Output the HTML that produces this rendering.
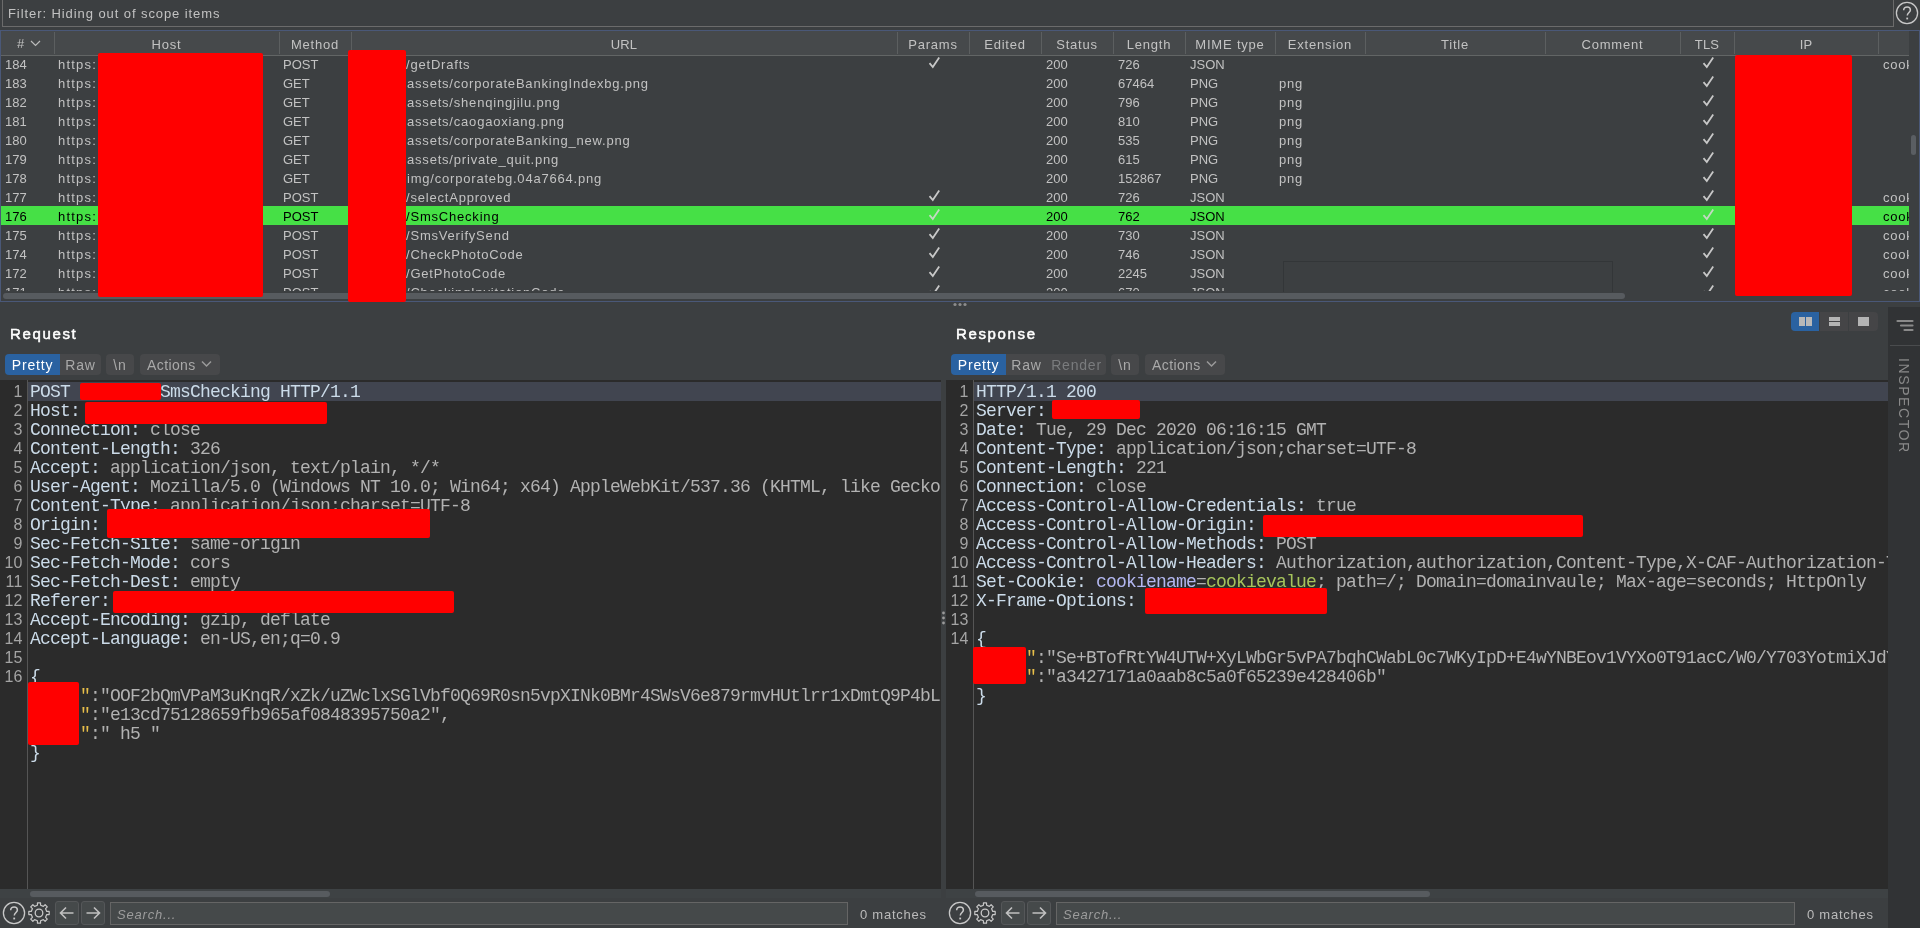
<!DOCTYPE html><html><head><meta charset="utf-8"><style>
*{margin:0;padding:0;box-sizing:border-box}
html,body{width:1920px;height:928px;overflow:hidden;background:#3c3f41;font-family:"Liberation Sans",sans-serif;font-size:13px;color:#c2c2c2;letter-spacing:0.8px;-webkit-font-smoothing:antialiased}
.a{position:absolute}
.red{position:absolute;background:#ff0000;border-radius:2px}
.t{position:absolute;white-space:nowrap}
.th{position:absolute;white-space:nowrap;top:0;line-height:27px;text-align:center}
.sep{position:absolute;width:1px;background:#5c5f60}
.row{position:absolute;left:0;width:1908px;height:19px;white-space:nowrap}
.row span{position:absolute;top:1px;line-height:19px}
.sel{background:#46e046;color:#000}
.u{letter-spacing:0}
.title{position:absolute;font-weight:normal;font-size:15px;color:#ffffff;letter-spacing:1.65px;-webkit-text-stroke:0.5px #ffffff}
.tb{position:absolute;height:21px;line-height:23px;background:#47484a;color:#a9a9a9;font-size:14px;text-align:center}
.tb.on{background:#2a62a1;color:#ffffff}
.ed{position:absolute;top:380px;height:509px;background:#2b2b2b;overflow:hidden}
.gut{position:absolute;left:27px;top:0;width:1px;height:509px;background:#555555}
.ln{position:absolute;left:0;width:22.6px;text-align:right;font-family:"Liberation Sans",sans-serif;font-size:16px;letter-spacing:0.2px;color:#a4a4a4;line-height:19px;white-space:pre}
.cur{position:absolute;left:28px;top:2px;height:19px;background:#414550}
.code{position:absolute;font-family:"Liberation Mono",monospace;font-size:18px;letter-spacing:-0.8016px;line-height:19px;white-space:pre;color:#b2b2b2}
.k{color:#cbdbe9}
.q{color:#e8bf4a}
.cn{color:#b3b7f0}
.cv{color:#a6c45c}
.search{position:absolute;height:23px;background:#45494a;border:1px solid #656565;font-style:italic;color:#9c9c9c;font-size:13px;line-height:23px;padding-left:6px;letter-spacing:0.8px}
.matches{position:absolute;line-height:24px;color:#bbbbbb;font-size:13px;letter-spacing:0.75px}
.btn{position:absolute;border:1px solid #555759;background:#45494a;border-radius:3px}
</style></head><body><div id="root" style="position:absolute;left:0;top:0;width:1920px;height:928px;overflow:hidden;will-change:transform">
<div class="a" style="left:2px;top:-2px;width:1892px;height:29px;border:1px solid #6b6b6b"></div>
<div class="t" style="left:8px;top:6px;line-height:16px;letter-spacing:0.92px">Filter: Hiding out of scope items</div>
<svg class="a" style="left:1895px;top:1px" width="24" height="24" viewBox="0 0 24 24"><circle cx="12" cy="12" r="10.6" fill="none" stroke="#c8c8c8" stroke-width="1.3"/><path d="M8.7 9.3c0-2.1 1.4-3.4 3.4-3.4s3.3 1.3 3.3 3.1c0 2.3-3.1 2.7-3.1 5.6" fill="none" stroke="#c8c8c8" stroke-width="1.5"/><rect x="11.3" y="16.6" width="1.8" height="1.8" fill="#c8c8c8"/></svg>
<div class="a" style="left:0;top:30px;width:1920px;height:272px;border:1px solid #4a5878"></div>
<div class="a" style="left:1px;top:31px;width:1908px;height:24px;background:#46494b"></div>
<div class="a" style="left:1px;top:55px;width:1908px;height:1px;background:#626565"></div>
<div class="sep" style="left:54px;top:32px;height:22px"></div>
<div class="sep" style="left:279px;top:32px;height:22px"></div>
<div class="sep" style="left:351px;top:32px;height:22px"></div>
<div class="sep" style="left:897px;top:32px;height:22px"></div>
<div class="sep" style="left:969px;top:32px;height:22px"></div>
<div class="sep" style="left:1041px;top:32px;height:22px"></div>
<div class="sep" style="left:1113px;top:32px;height:22px"></div>
<div class="sep" style="left:1185px;top:32px;height:22px"></div>
<div class="sep" style="left:1275px;top:32px;height:22px"></div>
<div class="sep" style="left:1365px;top:32px;height:22px"></div>
<div class="sep" style="left:1545px;top:32px;height:22px"></div>
<div class="sep" style="left:1680px;top:32px;height:22px"></div>
<div class="sep" style="left:1734px;top:32px;height:22px"></div>
<div class="sep" style="left:1878px;top:32px;height:22px"></div>
<div class="t" style="left:17px;top:36px;line-height:16px">#</div>
<svg class="a" style="left:30px;top:40px" width="11" height="7" viewBox="0 0 11 7"><path d="M1 1l4.5 4.5L10 1" fill="none" stroke="#bbbbbb" stroke-width="1.2"/></svg>
<div class="th" style="left:54px;width:225px;top:31px;height:24px">Host</div>
<div class="th" style="left:279px;width:72px;top:31px;height:24px">Method</div>
<div class="th" style="left:351px;width:546px;top:31px;height:24px;letter-spacing:0.2px">URL</div>
<div class="th" style="left:897px;width:72px;top:31px;height:24px">Params</div>
<div class="th" style="left:969px;width:72px;top:31px;height:24px">Edited</div>
<div class="th" style="left:1041px;width:72px;top:31px;height:24px">Status</div>
<div class="th" style="left:1113px;width:72px;top:31px;height:24px">Length</div>
<div class="th" style="left:1185px;width:90px;top:31px;height:24px">MIME type</div>
<div class="th" style="left:1275px;width:90px;top:31px;height:24px">Extension</div>
<div class="th" style="left:1365px;width:180px;top:31px;height:24px">Title</div>
<div class="th" style="left:1545px;width:135px;top:31px;height:24px">Comment</div>
<div class="th" style="left:1680px;width:54px;top:31px;height:24px;letter-spacing:0.2px">TLS</div>
<div class="th" style="left:1734px;width:144px;top:31px;height:24px;letter-spacing:0.2px">IP</div>
<div class="a" style="left:1px;top:56px;width:1908px;height:235px;overflow:hidden">
<div class="row" style="top:-2px">
<span class="u" style="left:4px">184</span>
<span style="left:57px;letter-spacing:1.2px">https:</span>
<span class="u" style="left:282px">POST</span>
<span style="left:405px">/getDrafts</span>
<svg class="a" style="left:927px;top:2px" width="13" height="13" viewBox="0 0 13 13"><path d="M1.5 7.2L4.8 11L11.2 1.5" fill="none" stroke="#c8c8c8" stroke-width="1.8" stroke-linejoin="miter"/></svg>
<span class="u" style="left:1045px">200</span>
<span class="u" style="left:1117px">726</span>
<span class="u" style="left:1189px">JSON</span>
<svg class="a" style="left:1701px;top:2px" width="13" height="13" viewBox="0 0 13 13"><path d="M1.5 7.2L4.8 11L11.2 1.5" fill="none" stroke="#c8c8c8" stroke-width="1.8" stroke-linejoin="miter"/></svg>
<span style="left:1882px">cookie</span>
</div>
<div class="row" style="top:17px">
<span class="u" style="left:4px">183</span>
<span style="left:57px;letter-spacing:1.2px">https:</span>
<span class="u" style="left:282px">GET</span>
<span style="left:406px">assets/corporateBankingIndexbg.png</span>
<span class="u" style="left:1045px">200</span>
<span class="u" style="left:1117px">67464</span>
<span class="u" style="left:1189px">PNG</span>
<span style="left:1278px">png</span>
<svg class="a" style="left:1701px;top:2px" width="13" height="13" viewBox="0 0 13 13"><path d="M1.5 7.2L4.8 11L11.2 1.5" fill="none" stroke="#c8c8c8" stroke-width="1.8" stroke-linejoin="miter"/></svg>
</div>
<div class="row" style="top:36px">
<span class="u" style="left:4px">182</span>
<span style="left:57px;letter-spacing:1.2px">https:</span>
<span class="u" style="left:282px">GET</span>
<span style="left:406px">assets/shenqingjilu.png</span>
<span class="u" style="left:1045px">200</span>
<span class="u" style="left:1117px">796</span>
<span class="u" style="left:1189px">PNG</span>
<span style="left:1278px">png</span>
<svg class="a" style="left:1701px;top:2px" width="13" height="13" viewBox="0 0 13 13"><path d="M1.5 7.2L4.8 11L11.2 1.5" fill="none" stroke="#c8c8c8" stroke-width="1.8" stroke-linejoin="miter"/></svg>
</div>
<div class="row" style="top:55px">
<span class="u" style="left:4px">181</span>
<span style="left:57px;letter-spacing:1.2px">https:</span>
<span class="u" style="left:282px">GET</span>
<span style="left:406px">assets/caogaoxiang.png</span>
<span class="u" style="left:1045px">200</span>
<span class="u" style="left:1117px">810</span>
<span class="u" style="left:1189px">PNG</span>
<span style="left:1278px">png</span>
<svg class="a" style="left:1701px;top:2px" width="13" height="13" viewBox="0 0 13 13"><path d="M1.5 7.2L4.8 11L11.2 1.5" fill="none" stroke="#c8c8c8" stroke-width="1.8" stroke-linejoin="miter"/></svg>
</div>
<div class="row" style="top:74px">
<span class="u" style="left:4px">180</span>
<span style="left:57px;letter-spacing:1.2px">https:</span>
<span class="u" style="left:282px">GET</span>
<span style="left:406px">assets/corporateBanking_new.png</span>
<span class="u" style="left:1045px">200</span>
<span class="u" style="left:1117px">535</span>
<span class="u" style="left:1189px">PNG</span>
<span style="left:1278px">png</span>
<svg class="a" style="left:1701px;top:2px" width="13" height="13" viewBox="0 0 13 13"><path d="M1.5 7.2L4.8 11L11.2 1.5" fill="none" stroke="#c8c8c8" stroke-width="1.8" stroke-linejoin="miter"/></svg>
</div>
<div class="row" style="top:93px">
<span class="u" style="left:4px">179</span>
<span style="left:57px;letter-spacing:1.2px">https:</span>
<span class="u" style="left:282px">GET</span>
<span style="left:406px">assets/private_quit.png</span>
<span class="u" style="left:1045px">200</span>
<span class="u" style="left:1117px">615</span>
<span class="u" style="left:1189px">PNG</span>
<span style="left:1278px">png</span>
<svg class="a" style="left:1701px;top:2px" width="13" height="13" viewBox="0 0 13 13"><path d="M1.5 7.2L4.8 11L11.2 1.5" fill="none" stroke="#c8c8c8" stroke-width="1.8" stroke-linejoin="miter"/></svg>
</div>
<div class="row" style="top:112px">
<span class="u" style="left:4px">178</span>
<span style="left:57px;letter-spacing:1.2px">https:</span>
<span class="u" style="left:282px">GET</span>
<span style="left:406px">img/corporatebg.04a7664.png</span>
<span class="u" style="left:1045px">200</span>
<span class="u" style="left:1117px">152867</span>
<span class="u" style="left:1189px">PNG</span>
<span style="left:1278px">png</span>
<svg class="a" style="left:1701px;top:2px" width="13" height="13" viewBox="0 0 13 13"><path d="M1.5 7.2L4.8 11L11.2 1.5" fill="none" stroke="#c8c8c8" stroke-width="1.8" stroke-linejoin="miter"/></svg>
</div>
<div class="row" style="top:131px">
<span class="u" style="left:4px">177</span>
<span style="left:57px;letter-spacing:1.2px">https:</span>
<span class="u" style="left:282px">POST</span>
<span style="left:405px">/selectApproved</span>
<svg class="a" style="left:927px;top:2px" width="13" height="13" viewBox="0 0 13 13"><path d="M1.5 7.2L4.8 11L11.2 1.5" fill="none" stroke="#c8c8c8" stroke-width="1.8" stroke-linejoin="miter"/></svg>
<span class="u" style="left:1045px">200</span>
<span class="u" style="left:1117px">726</span>
<span class="u" style="left:1189px">JSON</span>
<svg class="a" style="left:1701px;top:2px" width="13" height="13" viewBox="0 0 13 13"><path d="M1.5 7.2L4.8 11L11.2 1.5" fill="none" stroke="#c8c8c8" stroke-width="1.8" stroke-linejoin="miter"/></svg>
<span style="left:1882px">cookie</span>
</div>
<div class="row sel" style="top:150px">
<span class="u" style="left:4px">176</span>
<span style="left:57px;letter-spacing:1.2px">https:</span>
<span class="u" style="left:282px">POST</span>
<span style="left:405px">/SmsChecking</span>
<svg class="a" style="left:927px;top:2px" width="13" height="13" viewBox="0 0 13 13"><path d="M1.5 7.2L4.8 11L11.2 1.5" fill="none" stroke="#c4d8c4" stroke-width="1.8" stroke-linejoin="miter"/></svg>
<span class="u" style="left:1045px">200</span>
<span class="u" style="left:1117px">762</span>
<span class="u" style="left:1189px">JSON</span>
<svg class="a" style="left:1701px;top:2px" width="13" height="13" viewBox="0 0 13 13"><path d="M1.5 7.2L4.8 11L11.2 1.5" fill="none" stroke="#c4d8c4" stroke-width="1.8" stroke-linejoin="miter"/></svg>
<span style="left:1882px">cookie</span>
</div>
<div class="row" style="top:169px">
<span class="u" style="left:4px">175</span>
<span style="left:57px;letter-spacing:1.2px">https:</span>
<span class="u" style="left:282px">POST</span>
<span style="left:405px">/SmsVerifySend</span>
<svg class="a" style="left:927px;top:2px" width="13" height="13" viewBox="0 0 13 13"><path d="M1.5 7.2L4.8 11L11.2 1.5" fill="none" stroke="#c8c8c8" stroke-width="1.8" stroke-linejoin="miter"/></svg>
<span class="u" style="left:1045px">200</span>
<span class="u" style="left:1117px">730</span>
<span class="u" style="left:1189px">JSON</span>
<svg class="a" style="left:1701px;top:2px" width="13" height="13" viewBox="0 0 13 13"><path d="M1.5 7.2L4.8 11L11.2 1.5" fill="none" stroke="#c8c8c8" stroke-width="1.8" stroke-linejoin="miter"/></svg>
<span style="left:1882px">cookie</span>
</div>
<div class="row" style="top:188px">
<span class="u" style="left:4px">174</span>
<span style="left:57px;letter-spacing:1.2px">https:</span>
<span class="u" style="left:282px">POST</span>
<span style="left:405px">/CheckPhotoCode</span>
<svg class="a" style="left:927px;top:2px" width="13" height="13" viewBox="0 0 13 13"><path d="M1.5 7.2L4.8 11L11.2 1.5" fill="none" stroke="#c8c8c8" stroke-width="1.8" stroke-linejoin="miter"/></svg>
<span class="u" style="left:1045px">200</span>
<span class="u" style="left:1117px">746</span>
<span class="u" style="left:1189px">JSON</span>
<svg class="a" style="left:1701px;top:2px" width="13" height="13" viewBox="0 0 13 13"><path d="M1.5 7.2L4.8 11L11.2 1.5" fill="none" stroke="#c8c8c8" stroke-width="1.8" stroke-linejoin="miter"/></svg>
<span style="left:1882px">cookie</span>
</div>
<div class="row" style="top:207px">
<span class="u" style="left:4px">172</span>
<span style="left:57px;letter-spacing:1.2px">https:</span>
<span class="u" style="left:282px">POST</span>
<span style="left:405px">/GetPhotoCode</span>
<svg class="a" style="left:927px;top:2px" width="13" height="13" viewBox="0 0 13 13"><path d="M1.5 7.2L4.8 11L11.2 1.5" fill="none" stroke="#c8c8c8" stroke-width="1.8" stroke-linejoin="miter"/></svg>
<span class="u" style="left:1045px">200</span>
<span class="u" style="left:1117px">2245</span>
<span class="u" style="left:1189px">JSON</span>
<svg class="a" style="left:1701px;top:2px" width="13" height="13" viewBox="0 0 13 13"><path d="M1.5 7.2L4.8 11L11.2 1.5" fill="none" stroke="#c8c8c8" stroke-width="1.8" stroke-linejoin="miter"/></svg>
<span style="left:1882px">cookie</span>
</div>
<div class="row" style="top:226px">
<span class="u" style="left:4px">171</span>
<span style="left:57px;letter-spacing:1.2px">https:</span>
<span class="u" style="left:282px">POST</span>
<span style="left:405px">/CheckingInvitationCode</span>
<svg class="a" style="left:927px;top:2px" width="13" height="13" viewBox="0 0 13 13"><path d="M1.5 7.2L4.8 11L11.2 1.5" fill="none" stroke="#c8c8c8" stroke-width="1.8" stroke-linejoin="miter"/></svg>
<span class="u" style="left:1045px">200</span>
<span class="u" style="left:1117px">670</span>
<span class="u" style="left:1189px">JSON</span>
<svg class="a" style="left:1701px;top:2px" width="13" height="13" viewBox="0 0 13 13"><path d="M1.5 7.2L4.8 11L11.2 1.5" fill="none" stroke="#c8c8c8" stroke-width="1.8" stroke-linejoin="miter"/></svg>
<span style="left:1882px">cookie</span>
</div>
</div>
<div class="a" style="left:1909px;top:31px;width:10px;height:270px;background:#3c3f41"></div>
<div class="a" style="left:1911px;top:135px;width:5px;height:20px;border-radius:3px;background:#5a5e62"></div>
<div class="a" style="left:1283px;top:261px;width:330px;height:31px;border:1px solid #333638;border-bottom:none"></div>
<div class="a" style="left:3px;top:293px;width:1622px;height:6px;border-radius:3px;background:#575b5f"></div>
<div class="red" style="left:98px;top:53px;width:165px;height:244px"></div>
<div class="red" style="left:348px;top:50px;width:58px;height:252px"></div>
<div class="red" style="left:1735px;top:55px;width:117px;height:241px"></div>
<svg class="a" style="left:953px;top:302px" width="14" height="5" viewBox="0 0 14 5"><circle cx="2" cy="2.5" r="1.6" fill="#8c8c8c"/><circle cx="7" cy="2.5" r="1.6" fill="#8c8c8c"/><circle cx="12" cy="2.5" r="1.6" fill="#8c8c8c"/></svg>
<div class="title" style="left:10px;top:325px;line-height:18px">Request</div>
<div class="tb on" style="left:5px;top:354px;width:55px;border-radius:4px 0 0 4px">Pretty</div>
<div class="tb" style="left:60px;top:354px;width:41px;border-radius:0 4px 4px 0">Raw</div>
<div class="tb" style="left:106px;top:354px;width:28px;border-radius:4px">\n</div>
<div class="tb" style="left:140px;top:354px;width:80px;border-radius:4px;text-align:left;padding-left:7px;letter-spacing:0.4px">Actions</div>
<svg class="a" style="left:201px;top:360px" width="11" height="8" viewBox="0 0 11 8"><path d="M1 1.5l4.5 4.5L10 1.5" fill="none" stroke="#9a9a9a" stroke-width="1.5"/></svg>
<div class="ed" style="left:0px;width:941px">
<div class="gut"></div>
<div class="cur" style="width:913px"></div>
<div class="ln" style="top:2px">1</div>
<div class="code" style="left:30px;top:3px"><span class="k">POST </span>        <span class="k">SmsChecking HTTP/1.1</span></div>
<div class="ln" style="top:21px">2</div>
<div class="code" style="left:30px;top:22px"><span class="k">Host:</span> </div>
<div class="ln" style="top:40px">3</div>
<div class="code" style="left:30px;top:41px"><span class="k">Connection:</span> close</div>
<div class="ln" style="top:59px">4</div>
<div class="code" style="left:30px;top:60px"><span class="k">Content-Length:</span> 326</div>
<div class="ln" style="top:78px">5</div>
<div class="code" style="left:30px;top:79px"><span class="k">Accept:</span> application/json, text/plain, */*</div>
<div class="ln" style="top:97px">6</div>
<div class="code" style="left:30px;top:98px"><span class="k">User-Agent:</span> Mozilla/5.0 (Windows NT 10.0; Win64; x64) AppleWebKit/537.36 (KHTML, like Gecko) Chrome/87.0</div>
<div class="ln" style="top:116px">7</div>
<div class="code" style="left:30px;top:117px"><span class="k">Content-Type:</span> application/json;charset=UTF-8</div>
<div class="ln" style="top:135px">8</div>
<div class="code" style="left:30px;top:136px"><span class="k">Origin:</span> </div>
<div class="ln" style="top:154px">9</div>
<div class="code" style="left:30px;top:155px"><span class="k">Sec-Fetch-Site:</span> same-origin</div>
<div class="ln" style="top:173px">10</div>
<div class="code" style="left:30px;top:174px"><span class="k">Sec-Fetch-Mode:</span> cors</div>
<div class="ln" style="top:192px">11</div>
<div class="code" style="left:30px;top:193px"><span class="k">Sec-Fetch-Dest:</span> empty</div>
<div class="ln" style="top:211px">12</div>
<div class="code" style="left:30px;top:212px"><span class="k">Referer:</span> </div>
<div class="ln" style="top:230px">13</div>
<div class="code" style="left:30px;top:231px"><span class="k">Accept-Encoding:</span> gzip, deflate</div>
<div class="ln" style="top:249px">14</div>
<div class="code" style="left:30px;top:250px"><span class="k">Accept-Language:</span> en-US,en;q=0.9</div>
<div class="ln" style="top:268px">15</div>
<div class="code" style="left:30px;top:269px"></div>
<div class="ln" style="top:287px">16</div>
<div class="code" style="left:30px;top:288px"><span class="k">{</span></div>
<div class="code" style="left:30px;top:307px">     <span class="q">"</span>:"OOF2bQmVPaM3uKnqR/xZk/uZWclxSGlVbf0Q69R0sn5vpXINk0BMr4SWsV6e879rmvHUtlrr1xDmtQ9P4bLxx",</div>
<div class="code" style="left:30px;top:326px">     <span class="q">"</span>:"e13cd75128659fb965af0848395750a2",</div>
<div class="code" style="left:30px;top:345px">     <span class="q">"</span>:" h5 "</div>
<div class="code" style="left:30px;top:364px"><span class="k">}</span></div>
<div class="red" style="left:80px;top:3px;width:81px;height:17px"></div>
<div class="red" style="left:85px;top:22px;width:242px;height:22px"></div>
<div class="red" style="left:107px;top:129px;width:323px;height:29px"></div>
<div class="red" style="left:113px;top:211px;width:341px;height:22px"></div>
<div class="red" style="left:28px;top:302px;width:51px;height:63px"></div>
</div>
<div class="title" style="left:956px;top:325px;line-height:18px">Response</div>
<div class="tb on" style="left:951px;top:354px;width:55px;border-radius:4px 0 0 4px">Pretty</div>
<div class="tb" style="left:1006px;top:354px;width:41px;border-radius:0">Raw</div>
<div class="tb" style="left:1047px;top:354px;width:59px;border-radius:0 4px 4px 0;color:#7a7c7e">Render</div>
<div class="tb" style="left:1111px;top:354px;width:28px;border-radius:4px">\n</div>
<div class="tb" style="left:1145px;top:354px;width:80px;border-radius:4px;text-align:left;padding-left:7px;letter-spacing:0.4px">Actions</div>
<svg class="a" style="left:1206px;top:360px" width="11" height="8" viewBox="0 0 11 8"><path d="M1 1.5l4.5 4.5L10 1.5" fill="none" stroke="#9a9a9a" stroke-width="1.5"/></svg>
<div class="ed" style="left:946px;width:942px">
<div class="gut"></div>
<div class="cur" style="width:914px"></div>
<div class="ln" style="top:2px">1</div>
<div class="code" style="left:30px;top:3px"><span class="k">HTTP/1.1 200</span></div>
<div class="ln" style="top:21px">2</div>
<div class="code" style="left:30px;top:22px"><span class="k">Server:</span> </div>
<div class="ln" style="top:40px">3</div>
<div class="code" style="left:30px;top:41px"><span class="k">Date:</span> Tue, 29 Dec 2020 06:16:15 GMT</div>
<div class="ln" style="top:59px">4</div>
<div class="code" style="left:30px;top:60px"><span class="k">Content-Type:</span> application/json;charset=UTF-8</div>
<div class="ln" style="top:78px">5</div>
<div class="code" style="left:30px;top:79px"><span class="k">Content-Length:</span> 221</div>
<div class="ln" style="top:97px">6</div>
<div class="code" style="left:30px;top:98px"><span class="k">Connection:</span> close</div>
<div class="ln" style="top:116px">7</div>
<div class="code" style="left:30px;top:117px"><span class="k">Access-Control-Allow-Credentials:</span> true</div>
<div class="ln" style="top:135px">8</div>
<div class="code" style="left:30px;top:136px"><span class="k">Access-Control-Allow-Origin:</span> </div>
<div class="ln" style="top:154px">9</div>
<div class="code" style="left:30px;top:155px"><span class="k">Access-Control-Allow-Methods:</span> POST</div>
<div class="ln" style="top:173px">10</div>
<div class="code" style="left:30px;top:174px"><span class="k">Access-Control-Allow-Headers:</span> Authorization,authorization,Content-Type,X-CAF-Authorization-Token,sessionToken</div>
<div class="ln" style="top:192px">11</div>
<div class="code" style="left:30px;top:193px"><span class="k">Set-Cookie:</span> <span class="cn">cookiename</span>=<span class="cv">cookievalue</span>; path=/; Domain=domainvaule; Max-age=seconds; HttpOnly</div>
<div class="ln" style="top:211px">12</div>
<div class="code" style="left:30px;top:212px"><span class="k">X-Frame-Options:</span> </div>
<div class="ln" style="top:230px">13</div>
<div class="code" style="left:30px;top:231px"></div>
<div class="ln" style="top:249px">14</div>
<div class="code" style="left:30px;top:250px"><span class="k">{</span></div>
<div class="code" style="left:30px;top:269px">     <span class="q">"</span>:"Se+BTofRtYW4UTW+XyLWbGr5vPA7bqhCWabL0c7WKyIpD+E4wYNBEov1VYXo0T91acC/W0/Y703YotmiXJdYxx",</div>
<div class="code" style="left:30px;top:288px">     <span class="q">"</span>:"a3427171a0aab8c5a0f65239e428406b"</div>
<div class="code" style="left:30px;top:307px"><span class="k">}</span></div>
<div class="red" style="left:106px;top:20px;width:88px;height:19px"></div>
<div class="red" style="left:317px;top:135px;width:320px;height:22px"></div>
<div class="red" style="left:199px;top:208px;width:182px;height:26px"></div>
<div class="red" style="left:27px;top:267px;width:53px;height:37px"></div>
</div>
<div class="a" style="left:941px;top:380px;width:5px;height:518px;background:#3c3f41"></div>
<div class="a" style="left:1791px;top:312px;width:28px;height:19px;background:#2a62a1;border-radius:4px 0 0 4px"></div>
<div class="a" style="left:1820px;top:312px;width:28px;height:19px;background:#454547"></div>
<div class="a" style="left:1849px;top:312px;width:29px;height:19px;background:#454547;border-radius:0 4px 4px 0"></div>
<div class="a" style="left:1799px;top:317px;width:6px;height:9px;background:#b8b8b8"></div><div class="a" style="left:1806px;top:317px;width:6px;height:9px;background:#b8b8b8"></div>
<div class="a" style="left:1829px;top:317px;width:11px;height:4px;background:#b4b4b4"></div><div class="a" style="left:1829px;top:322px;width:11px;height:4px;background:#b4b4b4"></div>
<div class="a" style="left:1858px;top:317px;width:11px;height:9px;background:#b4b4b4"></div>
<div class="a" style="left:1888px;top:307px;width:32px;height:621px;background:#313335"></div>
<div class="a" style="left:1890px;top:345px;width:30px;height:1px;background:#4a4c4e"></div>
<svg class="a" style="left:1896px;top:319px" width="18" height="14" viewBox="0 0 18 14"><path d="M1.5 2h15M5 6.5h11.5M8.5 11h8" stroke="#8a8a8a" stroke-width="2.2" stroke-linecap="round"/></svg>
<div class="t" style="left:1896px;top:358px;writing-mode:vertical-rl;font-size:14px;color:#8a8a8a;letter-spacing:1.6px">INSPECTOR</div>
<div class="a" style="left:0;top:889px;width:941px;height:9px;background:#3e4244"></div>
<div class="a" style="left:946px;top:889px;width:942px;height:9px;background:#3e4244"></div>
<div class="a" style="left:30px;top:891px;width:300px;height:6px;border-radius:3px;background:#575b5f"></div>
<div class="a" style="left:975px;top:891px;width:455px;height:6px;border-radius:3px;background:#575b5f"></div>
<svg class="a" style="left:2px;top:901px" width="24" height="24" viewBox="0 0 24 24"><circle cx="12" cy="12" r="10.6" fill="none" stroke="#c8c8c8" stroke-width="1.3"/><path d="M8.7 9.3c0-2.1 1.4-3.4 3.4-3.4s3.3 1.3 3.3 3.1c0 2.3-3.1 2.7-3.1 5.6" fill="none" stroke="#c8c8c8" stroke-width="1.5"/><rect x="11.3" y="16.6" width="1.8" height="1.8" fill="#c8c8c8"/></svg>
<svg class="a" style="left:27px;top:901px" width="24" height="24" viewBox="0 0 24 24"><path d="M19.74 10.40 L22.19 10.47 L22.19 13.53 L19.74 13.60 L18.60 16.34 L20.29 18.12 L18.12 20.29 L16.34 18.60 L13.60 19.74 L13.53 22.19 L10.47 22.19 L10.40 19.74 L7.66 18.60 L5.88 20.29 L3.71 18.12 L5.40 16.34 L4.26 13.60 L1.81 13.53 L1.81 10.47 L4.26 10.40 L5.40 7.66 L3.71 5.88 L5.88 3.71 L7.66 5.40 L10.40 4.26 L10.47 1.81 L13.53 1.81 L13.60 4.26 L16.34 5.40 L18.12 3.71 L20.29 5.88 L18.60 7.66Z" fill="none" stroke="#c8c8c8" stroke-width="1.2" stroke-linejoin="round"/><circle cx="12" cy="12" r="3.8" fill="none" stroke="#c8c8c8" stroke-width="1.3"/></svg>
<div class="btn" style="left:55px;top:901px;width:24px;height:24px"></div><svg class="a" style="left:55px;top:901px" width="24" height="24" viewBox="0 0 24 24"><path d="M11 6.5l-5.5 5.5 5.5 5.5M5.5 12h13" fill="none" stroke="#c0c0c0" stroke-width="1.6"/></svg>
<div class="btn" style="left:81px;top:901px;width:24px;height:24px"></div><svg class="a" style="left:81px;top:901px" width="24" height="24" viewBox="0 0 24 24"><path d="M13 6.5l5.5 5.5-5.5 5.5M5.5 12h13" fill="none" stroke="#c0c0c0" stroke-width="1.6"/></svg>
<div class="search" style="left:110px;top:902px;width:738px">Search...</div>
<div class="matches" style="left:860px;top:903px">0 matches</div>
<svg class="a" style="left:948px;top:901px" width="24" height="24" viewBox="0 0 24 24"><circle cx="12" cy="12" r="10.6" fill="none" stroke="#c8c8c8" stroke-width="1.3"/><path d="M8.7 9.3c0-2.1 1.4-3.4 3.4-3.4s3.3 1.3 3.3 3.1c0 2.3-3.1 2.7-3.1 5.6" fill="none" stroke="#c8c8c8" stroke-width="1.5"/><rect x="11.3" y="16.6" width="1.8" height="1.8" fill="#c8c8c8"/></svg>
<svg class="a" style="left:973px;top:901px" width="24" height="24" viewBox="0 0 24 24"><path d="M19.74 10.40 L22.19 10.47 L22.19 13.53 L19.74 13.60 L18.60 16.34 L20.29 18.12 L18.12 20.29 L16.34 18.60 L13.60 19.74 L13.53 22.19 L10.47 22.19 L10.40 19.74 L7.66 18.60 L5.88 20.29 L3.71 18.12 L5.40 16.34 L4.26 13.60 L1.81 13.53 L1.81 10.47 L4.26 10.40 L5.40 7.66 L3.71 5.88 L5.88 3.71 L7.66 5.40 L10.40 4.26 L10.47 1.81 L13.53 1.81 L13.60 4.26 L16.34 5.40 L18.12 3.71 L20.29 5.88 L18.60 7.66Z" fill="none" stroke="#c8c8c8" stroke-width="1.2" stroke-linejoin="round"/><circle cx="12" cy="12" r="3.8" fill="none" stroke="#c8c8c8" stroke-width="1.3"/></svg>
<div class="btn" style="left:1001px;top:901px;width:24px;height:24px"></div><svg class="a" style="left:1001px;top:901px" width="24" height="24" viewBox="0 0 24 24"><path d="M11 6.5l-5.5 5.5 5.5 5.5M5.5 12h13" fill="none" stroke="#c0c0c0" stroke-width="1.6"/></svg>
<div class="btn" style="left:1027px;top:901px;width:24px;height:24px"></div><svg class="a" style="left:1027px;top:901px" width="24" height="24" viewBox="0 0 24 24"><path d="M13 6.5l5.5 5.5-5.5 5.5M5.5 12h13" fill="none" stroke="#c0c0c0" stroke-width="1.6"/></svg>
<div class="search" style="left:1056px;top:902px;width:739px">Search...</div>
<div class="matches" style="left:1807px;top:903px">0 matches</div>
<svg class="a" style="left:941px;top:610px" width="5" height="16" viewBox="0 0 5 16"><circle cx="2.5" cy="3" r="1.4" fill="#9a9a9a"/><circle cx="2.5" cy="8" r="1.4" fill="#9a9a9a"/><circle cx="2.5" cy="13" r="1.4" fill="#9a9a9a"/></svg>
</div></body></html>
